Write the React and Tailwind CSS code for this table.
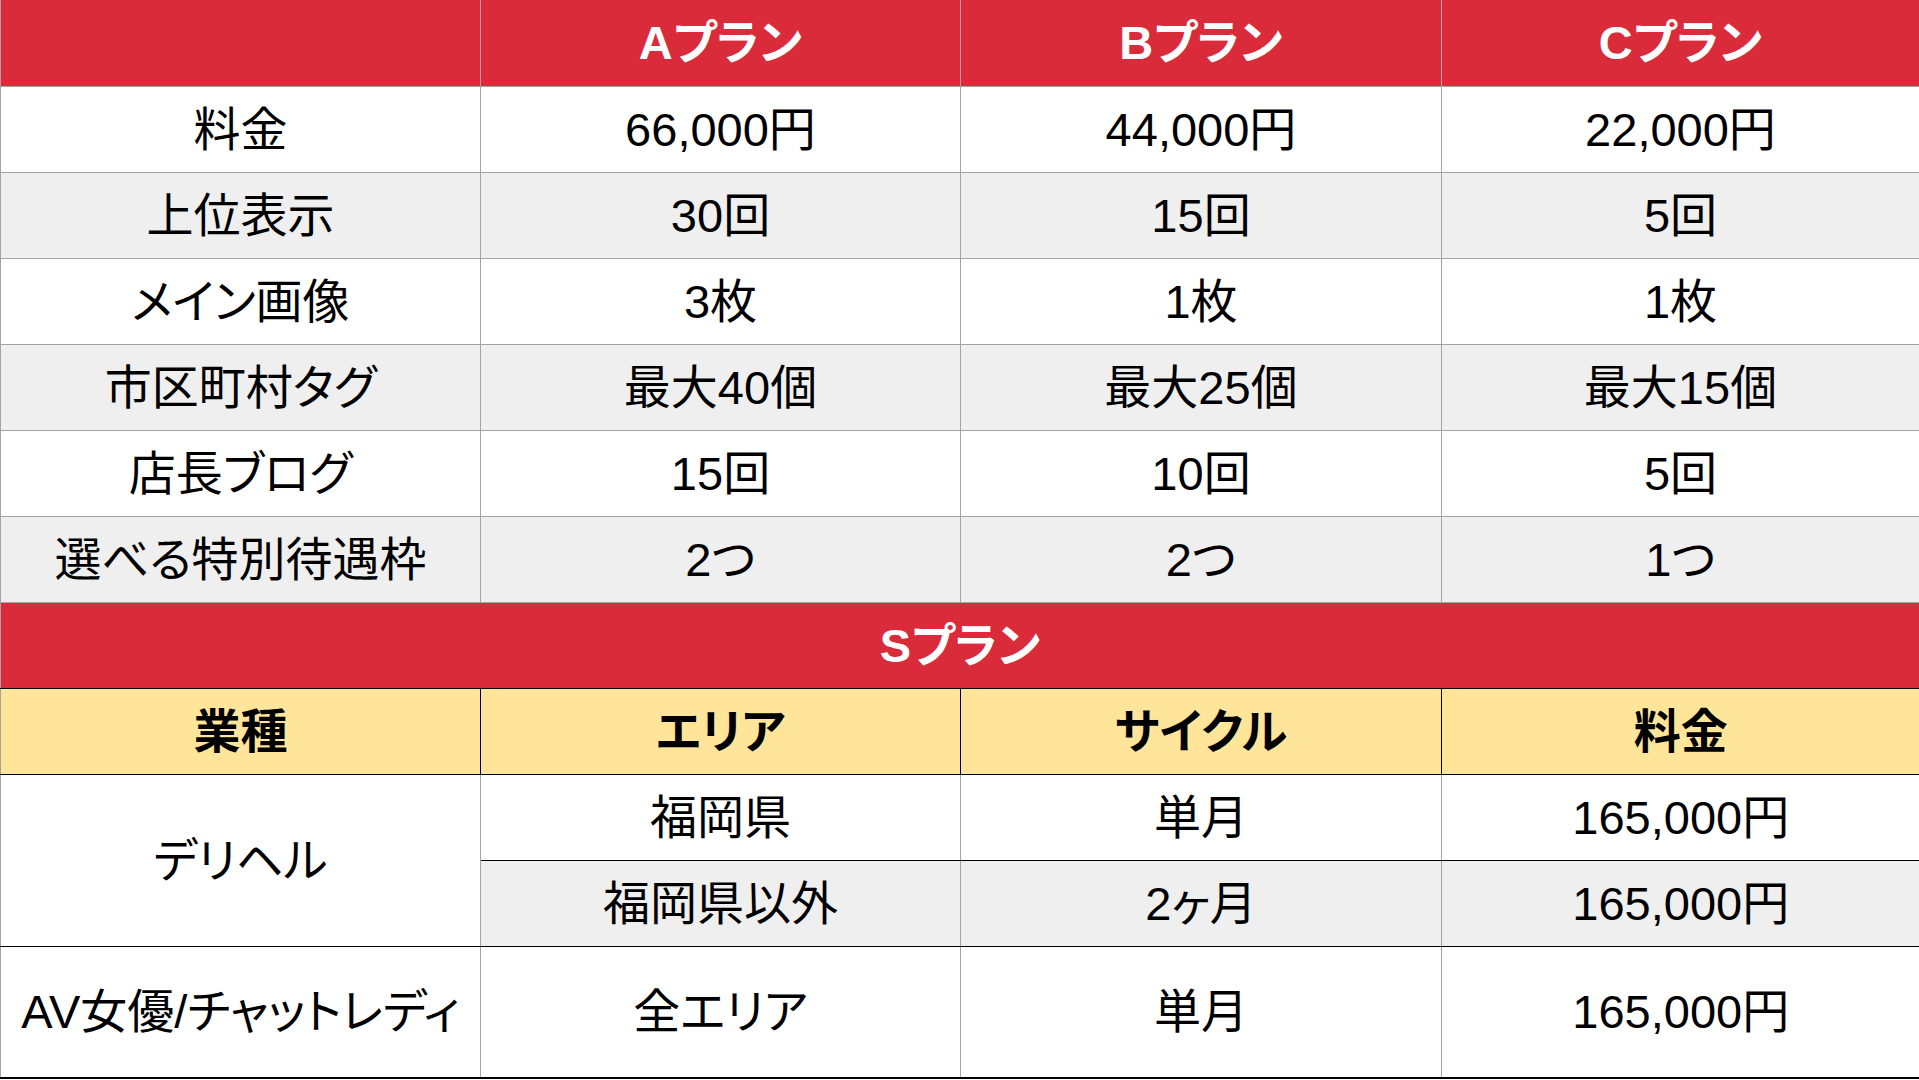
const font = { fontFamily: '"Liberation Sans", "Noto Sans CJK JP", sans-serif' }

// ── Data ──────────────────────────────────────────────────────────────────────
const plans = ['Aプラン', 'Bプラン', 'Cプラン']

const rows = [
  ['料金', '66,000円', '44,000円', '22,000円'],
  ['上位表示', '30回', '15回', '5回'],
  ['メイン画像', '3枚', '1枚', '1枚'],
  ['市区町村タグ', '最大40個', '最大25個', '最大15個'],
  ['店長ブログ', '15回', '10回', '5回'],
  ['選べる特別待遇枠', '2つ', '2つ', '1つ'],
]

const sHead = ['業種', 'エリア', 'サイクル', '料金']

const grayCell = 'border border-[#a3a3a3] text-center align-middle p-0'

// ── Main component ────────────────────────────────────────────────────────────
export default function App() {
  return (
    <div className="w-[1919px] h-[1080px] bg-white overflow-hidden [font-feature-settings:'palt']" style={font}>
      <table className="w-[1919px] table-fixed border-collapse text-[47px] leading-none text-black whitespace-nowrap">
        <colgroup>
          <col className="w-[480px]" />
          <col className="w-[480px]" />
          <col className="w-[481px]" />
          <col className="w-[478px]" />
        </colgroup>
        <tbody>
          {/* Plan header */}
          <tr className="h-[86px] bg-[#d92b3a]">
            <td className="border border-[#a3a3a3] border-t-0 p-0" />
            {plans.map(p => (
              <td key={p} className="border border-[#a3a3a3] border-t-0 p-0 text-center align-middle font-bold text-white">
                {p}
              </td>
            ))}
          </tr>

          {/* Plan rows */}
          {rows.map((r, i) => (
            <tr key={r[0]} className={`h-[86px] ${i % 2 === 1 ? 'bg-[#efefef]' : 'bg-white'}`}>
              {r.map((c, j) => (
                <td key={j} className={grayCell}>{c}</td>
              ))}
            </tr>
          ))}

          {/* S plan */}
          <tr className="h-[86px] bg-[#d92b3a]">
            <td colSpan={4} className="border border-[#a3a3a3] border-b-black p-0 text-center align-middle font-bold text-white">
              Sプラン
            </td>
          </tr>
          <tr className="h-[86px] bg-[#ffe599]">
            {sHead.map((h, j) => (
              <td
                key={h}
                className={`border border-black p-0 text-center align-middle font-bold ${j === 0 ? 'border-l-[#a3a3a3]' : ''} ${j === 3 ? 'border-r-0' : ''}`}
              >
                {h}
              </td>
            ))}
          </tr>
          <tr className="h-[86px] bg-white">
            <td rowSpan={2} className="border border-black border-l-[#a3a3a3] border-r-[#a3a3a3] p-0 text-center align-middle">
              デリヘル
            </td>
            <td className="border-b border-black border-r border-r-[#a3a3a3] p-0 text-center align-middle">福岡県</td>
            <td className="border-b border-black border-r border-r-[#a3a3a3] p-0 text-center align-middle">単月</td>
            <td className="border-b border-black p-0 text-center align-middle">165,000円</td>
          </tr>
          <tr className="h-[86px] bg-[#efefef]">
            <td className="border-b border-black border-r border-r-[#a3a3a3] p-0 text-center align-middle">福岡県以外</td>
            <td className="border-b border-black border-r border-r-[#a3a3a3] p-0 text-center align-middle">2ヶ月</td>
            <td className="border-b border-black p-0 text-center align-middle">165,000円</td>
          </tr>
          <tr className="h-[132px] bg-white">
            <td className="border-b-2 border-b-black border-l border-l-[#a3a3a3] border-r border-r-[#a3a3a3] p-0 text-center align-middle">
              AV女優/チャットレディ
            </td>
            <td className="border-b-2 border-b-black border-r border-r-[#a3a3a3] p-0 text-center align-middle">全エリア</td>
            <td className="border-b-2 border-b-black border-r border-r-[#a3a3a3] p-0 text-center align-middle">単月</td>
            <td className="border-b-2 border-b-black p-0 text-center align-middle">165,000円</td>
          </tr>
        </tbody>
      </table>
    </div>
  )
}
